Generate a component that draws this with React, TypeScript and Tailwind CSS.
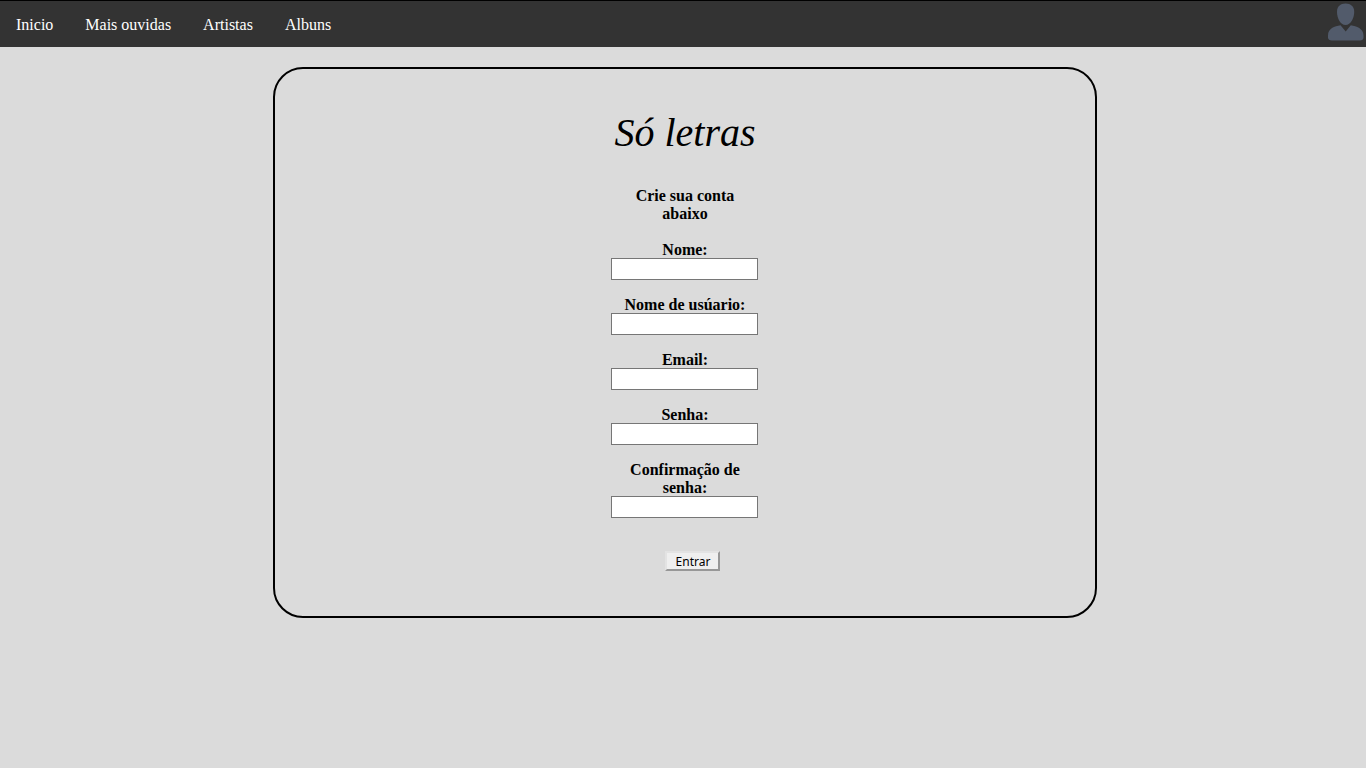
const links = ["Inicio", "Mais ouvidas", "Artistas", "Albuns"];

const fields = [
  { id: "nome", label: "Nome:", type: "text" },
  { id: "usuario", label: "Nome de usúario:", type: "text" },
  { id: "email", label: "Email:", type: "email" },
  { id: "senha", label: "Senha:", type: "password" },
  { id: "confirmacao", label: "Confirmação de senha:", type: "password" },
];

function UserIcon() {
  return (
    <svg viewBox="0 0 38 44" className="block h-11 w-[38px]" fill="#525b6b" aria-hidden="true">
      <path d="M17.5 2.500C12.300 2.500 9 5.500 9 10.700c0 6.300 3.200 13.300 8.500 13.300s8.700-7 8.700-13.300C26.200 5.500 22.800 2.500 17.500 2.500z" />
      <path d="M12.500 24.300 17.700 30.500 22.800 24.300C28.500 25.300 35.500 27.500 35.500 34.500V36.500C35.500 38.500 34 39.500 32 39.500H4C1.500 39.500 0 38.500 0 36.500V34.500C0 27.500 6.500 25.300 12.500 24.300z" />
    </svg>
  );
}

function Navbar() {
  return (
    <nav className="flex justify-between border-t border-black bg-[#333333]">
      <ul className="flex">
        {links.map((link) => (
          <li key={link}>
            <a href="#" className="block px-4 pt-[15px] pb-[13px] leading-[18px] text-white hover:bg-black">
              {link}
            </a>
          </li>
        ))}
      </ul>
      <a href="#" aria-label="Minha conta">
        <UserIcon />
      </a>
    </nav>
  );
}

export default function App() {
  return (
    <div className="min-h-screen bg-[#dbdbdb] font-['Liberation_Serif','Times_New_Roman',serif] text-base text-black">
      <Navbar />
      <main className="mt-5 ml-[20%] w-fit min-w-[calc(60%+4px)] rounded-[30px] border-2 border-black pt-[41px] pb-[45px]">
        <h1 className="text-center text-[40px] leading-[46px] italic">Só letras</h1>
        <form className="mx-auto mt-[31px] flex w-[147px] flex-col text-center leading-[18px] font-bold">
          <p className="mb-[18px] px-3">Crie sua conta abaixo</p>
          <div className="flex flex-col gap-4">
            {fields.map((field) => (
              <div key={field.id} className="flex flex-col">
                <label htmlFor={field.id} className="-mb-px">
                  {field.label}
                </label>
                <input
                  id={field.id}
                  name={field.id}
                  type={field.type}
                  className="h-[22px] w-full border border-[#767676] bg-white px-1 text-[13px] font-normal"
                />
              </div>
            ))}
          </div>
          <button
            type="submit"
            className="mt-[33px] ml-[54px] h-5 w-[55px] border-2 border-t-[#e3e3e3] border-r-[#979797] border-b-[#979797] border-l-[#e3e3e3] bg-[#efefef] pt-px font-['Noto_Sans','Open_Sans',sans-serif] text-[12px] leading-4 font-normal"
          >
            Entrar
          </button>
        </form>
      </main>
    </div>
  );
}
